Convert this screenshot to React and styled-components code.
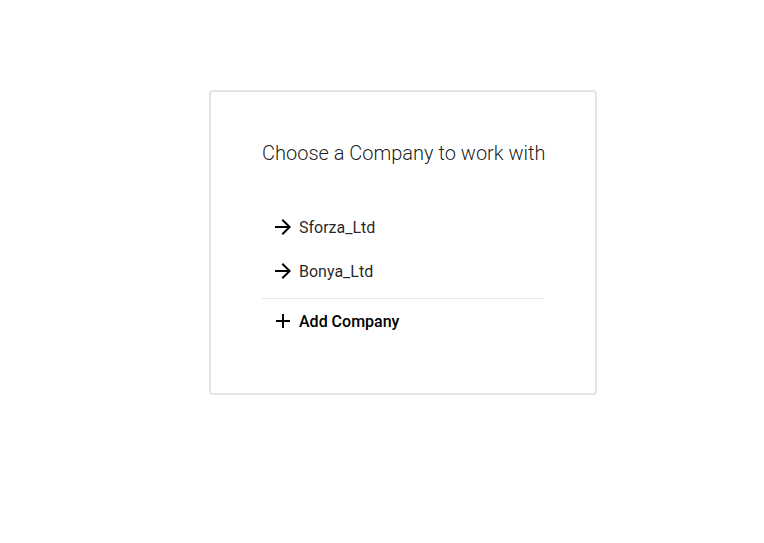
import React from "react";
import styled, { createGlobalStyle } from "styled-components";

const Global = createGlobalStyle`
  html, body { margin: 0; padding: 0; background: #fff; }
  body { font-family: Roboto, "Noto Sans", Arial, sans-serif; color: rgba(0,0,0,0.87); }
`;

const Page = styled.div`
  display: flex;
  align-items: flex-start;
  padding: 90px 0 0 209px;
`;

const Card = styled.div`
  box-sizing: border-box;
  width: 388px;
  border: 2px solid #e4e4e4;
  border-radius: 4px;
  padding: 49px 51px 50px 51px;
  display: flex;
  flex-direction: column;
`;

const Title = styled.h1`
  margin: 0 0 40px 0;
  font-family: Roboto, sans-serif;
  font-weight: 300;
  font-size: 20px;
  line-height: 24px;
  color: rgba(0,0,0,0.9);
  white-space: nowrap;
`;

const List = styled.div`
  display: flex;
  flex-direction: column;
`;

const Item = styled.div`
  display: flex;
  align-items: center;
  height: 44px;
  padding-left: 9px;
  gap: 4px;
  font-size: 16px;
  font-weight: ${(p) => (p.$bold ? 500 : 400)};
  color: ${(p) => (p.$bold ? "#000" : "rgba(0,0,0,0.87)")};
  cursor: pointer;
`;

const Divider = styled.hr`
  margin: 5px 0 0 0;
  border: none;
  border-top: 1px solid #e6e6e6;
  height: 0;
`;

const Icon = styled.svg`
  width: 24px;
  height: 24px;
  flex: none;
  fill: #000;
`;

const ArrowIcon = () => (
  <Icon viewBox="0 0 24 24">
    <path d="M12 4l-1.41 1.41L16.17 11H4v2h12.17l-5.58 5.59L12 20l8-8z" />
  </Icon>
);

const AddIcon = () => (
  <Icon viewBox="0 0 24 24">
    <path d="M19 13h-6v6h-2v-6H5v-2h6V5h2v6h6v2z" />
  </Icon>
);

const companies = ["Sforza_Ltd", "Bonya_Ltd"];

export default function App() {
  return (
    <>
      <Global />
      <Page>
        <Card>
          <Title>Choose a Company to work with</Title>
          <List>
            {companies.map((c) => (
              <Item key={c}>
                <ArrowIcon />
                <span>{c}</span>
              </Item>
            ))}
            <Divider />
            <Item $bold>
              <AddIcon />
              <span>Add Company</span>
            </Item>
          </List>
        </Card>
      </Page>
    </>
  );
}
